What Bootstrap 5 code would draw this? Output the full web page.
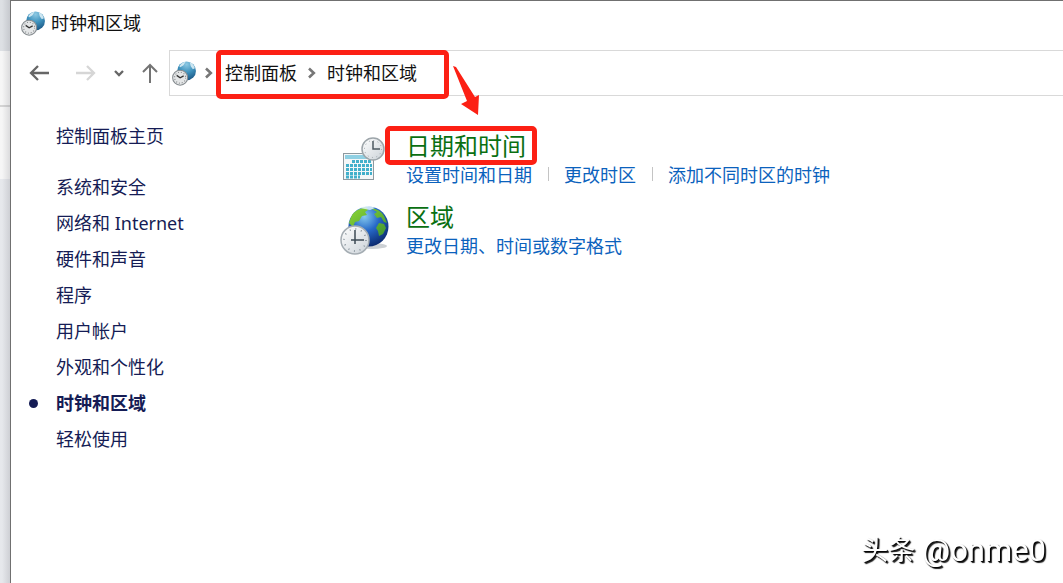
<!DOCTYPE html>
<html lang="zh-CN">
<head>
<meta charset="utf-8">
<meta name="viewport" content="width=device-width, initial-scale=1">
<title>时钟和区域</title>
<link href="https://cdn.jsdelivr.net/npm/bootstrap@5.3.0/dist/css/bootstrap.min.css" rel="stylesheet">
<style>
  body { font-family: "Noto Sans", "Noto Sans CJK SC", sans-serif; font-size: 18px; line-height: 24px; color: #111; background: #fff; }
  a { text-decoration: none; }
  .backdrop { flex: 0 0 10px; background: linear-gradient(90deg, transparent 2px, rgba(80,80,90,.16)), linear-gradient(#dde0e4 51px, #f6f6f6 51px 105px, #d4d4d4 105px 107px, #f6f6f6 107px 179px, #e6e8ec 179px); }
  .app-window { border-left: 1px solid #707070; border-top: 1px solid #707070; min-width: 0; }
  .title-bar { height: 49px; padding: 0 0 5px 10px; gap: 5px; }
  .nav-bar { height: 46px; }
  .tool { border: 0; background: none; padding: 0; display: flex; justify-content: center; align-items: center; }
  .address { border: 1px solid #d9d9d9; border-right: 0; padding-left: 2px; }
  .crumbs { position: relative; margin-left: 12px; gap: 11px; }
  .crumbs a { color: #111; }
  .crumbs::before, .marked::before { content: ""; position: absolute; border: 5px solid #fc2014; border-radius: 5px; pointer-events: none; }
  .crumbs::before { inset: -11px -32px -14px -9px; }
  .marked { position: relative; }
  .marked::before { inset: -6px -11px -5px -21px; }
  .pointer { position: absolute; left: 228px; top: 5px; }
  .side { flex: 0 0 329px; padding: 28px 0 0 45px; }
  .side a { color: #151c55; }
  .side li { margin-bottom: 12px; }
  .side .home { margin-bottom: 27px; }
  .side .current { position: relative; font-weight: 700; }
  .current::before { content: ""; position: absolute; left: -27px; top: 8px; width: 9px; height: 9px; border-radius: 50%; background: #151c55; }
  .categories { padding-top: 36px; }
  .category { height: 71px; gap: 16px; }
  .category h2 { font-size: 24px; line-height: 28px; margin: 0 0 3px; font-weight: 400; }
  .category h2 a { color: #0a7012; }
  .tasks a { color: #0b62bd; }
  .tasks a + a { margin-left: 16px; padding-left: 16px; background: linear-gradient(#c4c4c4, #c4c4c4) 0 4px / 1px 14px no-repeat; }
  .watermark { position: fixed; right: 17px; bottom: 14px; gap: 7px; font-family: Roboto, "Noto Sans CJK SC", sans-serif; font-size: 27px; line-height: 36px; color: #fff; text-shadow: 1px 1px 1px #000, 2px 2px 1px #222; }
  .handle { font-size: 31px; }
</style>
</head>
<body>
<svg width="0" height="0" class="position-absolute" aria-hidden="true">
  <defs>
    <radialGradient id="sea" cx=".4" cy=".25" r=".8"><stop offset="0" stop-color="#85c9ee"/><stop offset=".45" stop-color="#2769c8"/><stop offset="1" stop-color="#092568"/></radialGradient>
    <radialGradient id="ice" cx=".5" cy=".15" r=".85"><stop offset="0" stop-color="#8dc9e3"/><stop offset=".5" stop-color="#3f93be"/><stop offset="1" stop-color="#1b5684"/></radialGradient>
    <linearGradient id="dial" x2="1" y2="1"><stop stop-color="#fff"/><stop offset="1" stop-color="#cbd2d8"/></linearGradient>
    <linearGradient id="land" x2="1" y2="1"><stop stop-color="#8ed735"/><stop offset="1" stop-color="#409532"/></linearGradient>
    <symbol id="globe-clock" viewBox="0 0 24 24">
      <circle cx="14" cy="9.500" r="9" fill="url(#ice)"/>
      <path d="M7 5Q10 1 13 1L11 4 8 6ZM17 1Q21 3 22 7L20 8 18 5Z" fill="#e2f1f7" opacity=".85"/>
      <circle cx="7.800" cy="16" r="7.200" fill="#e4e6e7" stroke="#868c90"/>
      <circle cx="7.800" cy="16" r="5.300" fill="none" stroke="#85898c" stroke-dasharray="1 1.780"/>
      <path d="M4.500 13.800l3.300 2.400 3.400-1.900" fill="none" stroke="#333" stroke-width="1.200"/>
    </symbol>
    <symbol id="chev" viewBox="0 0 8 12"><path d="M1 1.500L5.800 6 1 10.500" fill="none" stroke="#777" stroke-width="2.600"/></symbol>
  </defs>
</svg>
<div class="d-flex min-vh-100">
  <div class="backdrop"></div>
  <div class="app-window flex-grow-1">
    <header class="title-bar d-flex align-items-center">
      <svg width="25" height="25"><use href="#globe-clock"/></svg><span>时钟和区域</span>
    </header>
    <nav class="nav-bar d-flex" aria-label="导航">
      <div class="d-flex flex-shrink-0 ps-3">
        <button class="tool" type="button" aria-label="后退"><svg width="26" height="20" fill="none" stroke="#666" stroke-width="2.300"><path d="M22 10H4M11 3l-7 7 7 7"/></svg></button>
        <button class="tool ms-3" type="button" aria-label="前进"><svg width="32" height="20" fill="none" stroke="#d6d6d6" stroke-width="2.300"><path d="M7 10h18M18 3l7 7-7 7"/></svg></button>
        <button class="tool ms-2" type="button" aria-label="最近位置"><svg width="18" height="12" fill="none" stroke="#666" stroke-width="2.300"><path d="M6 4l4 4 4-4"/></svg></button>
        <button class="tool ms-2" type="button" aria-label="向上"><svg width="34" height="24" fill="none" stroke="#747474" stroke-width="2"><path d="M15 22V4M8 11l7-7 7 7"/></svg></button>
      </div>
      <div class="address d-flex align-items-center flex-grow-1">
        <svg width="25" height="25"><use href="#globe-clock"/></svg>
        <svg class="ms-2" width="8" height="12"><use href="#chev"/></svg>
        <div class="crumbs d-flex align-items-center">
          <a href="#">控制面板</a><svg width="8" height="12"><use href="#chev"/></svg><a href="#">时钟和区域</a>
          <svg class="pointer" width="28" height="52"><path d="M0 0L3 1 22 31 26 29 25 49 8 38 14 35Z" fill="#fc2014"/></svg>
        </div>
      </div>
    </nav>
    <main class="d-flex">
      <ul class="side list-unstyled mb-0">
        <li class="home"><a href="#">控制面板主页</a></li>
        <li><a href="#">系统和安全</a></li>
        <li><a href="#">网络和 Internet</a></li>
        <li><a href="#">硬件和声音</a></li>
        <li><a href="#">程序</a></li>
        <li><a href="#">用户帐户</a></li>
        <li><a href="#">外观和个性化</a></li>
        <li class="current"><a href="#">时钟和区域</a></li>
        <li><a href="#">轻松使用</a></li>
      </ul>
      <div class="categories">
        <section class="category d-flex">
          <svg width="50" height="50" viewBox="0 0 50 50">
            <rect x="3.500" y="21.500" width="30" height="26" fill="#f4f7f8" stroke="#8d999f"/>
            <path d="M5 23h27v4H5z" fill="#8fd0e3"/>
            <path d="M12 29.500h20M6 33.500h26M6 37.500h26M6 41.500h26M6 45h14" stroke="#43b0cb" stroke-width="3" stroke-dasharray="3 1" fill="none"/>
            <circle cx="33" cy="17" r="11" fill="url(#dial)" stroke="#9da5aa" stroke-width="1.500"/>
            <circle cx="33" cy="17" r="8.500" fill="none" stroke="#9aa2a8" stroke-dasharray="1 3.450"/>
            <path d="M33 9v8h7" fill="none" stroke="#4e5962" stroke-width="1.500"/>
          </svg>
          <div>
            <h2><a class="marked d-inline-block" href="#">日期和时间</a></h2>
            <div class="tasks"><a href="#">设置时间和日期</a><a href="#">更改时区</a><a href="#">添加不同时区的时钟</a></div>
          </div>
        </section>
        <section class="category d-flex">
          <svg width="50" height="54" viewBox="0 0 50 54">
            <ellipse cx="32" cy="43" rx="15" ry="3" fill="#ccd0d4"/>
            <circle cx="28.500" cy="23.500" r="20" fill="url(#sea)"/>
            <path d="M9 20Q12 8 20 6l6-2 2 3-3 2 2 3-5 1-3 5-4 1-2 5ZM31 5q9 1 13 8l3 7-3-1-3-5-4 1-3-4 3-2-5-3ZM39 20l5 1 2 4-3 6-4 2-1-5-2-3Z" fill="url(#land)"/>
            <path d="M20 5q8-4 15 0l-5 2-5-1Z" fill="#eaf8fc" opacity=".8"/>
            <circle cx="15" cy="37" r="14" fill="url(#dial)" stroke="#a5adb3" stroke-width="1.500"/>
            <circle cx="15" cy="37" r="11" fill="none" stroke="#7f8b94" stroke-width="1.500" stroke-dasharray="1 4.760"/>
            <path d="M15 27v10h9M15 37v4M15 37h-4" fill="none" stroke="#3c4a54" stroke-width="1.500"/>
          </svg>
          <div>
            <h2><a href="#">区域</a></h2>
            <div class="tasks"><a href="#">更改日期、时间或数字格式</a></div>
          </div>
        </section>
      </div>
    </main>
  </div>
</div>
<div class="watermark d-flex align-items-center"><span>头条</span><span class="handle">@onme0</span></div>
<script src="https://cdn.jsdelivr.net/npm/bootstrap@5.3.0/dist/js/bootstrap.bundle.min.js"></script>
</body>
</html>
